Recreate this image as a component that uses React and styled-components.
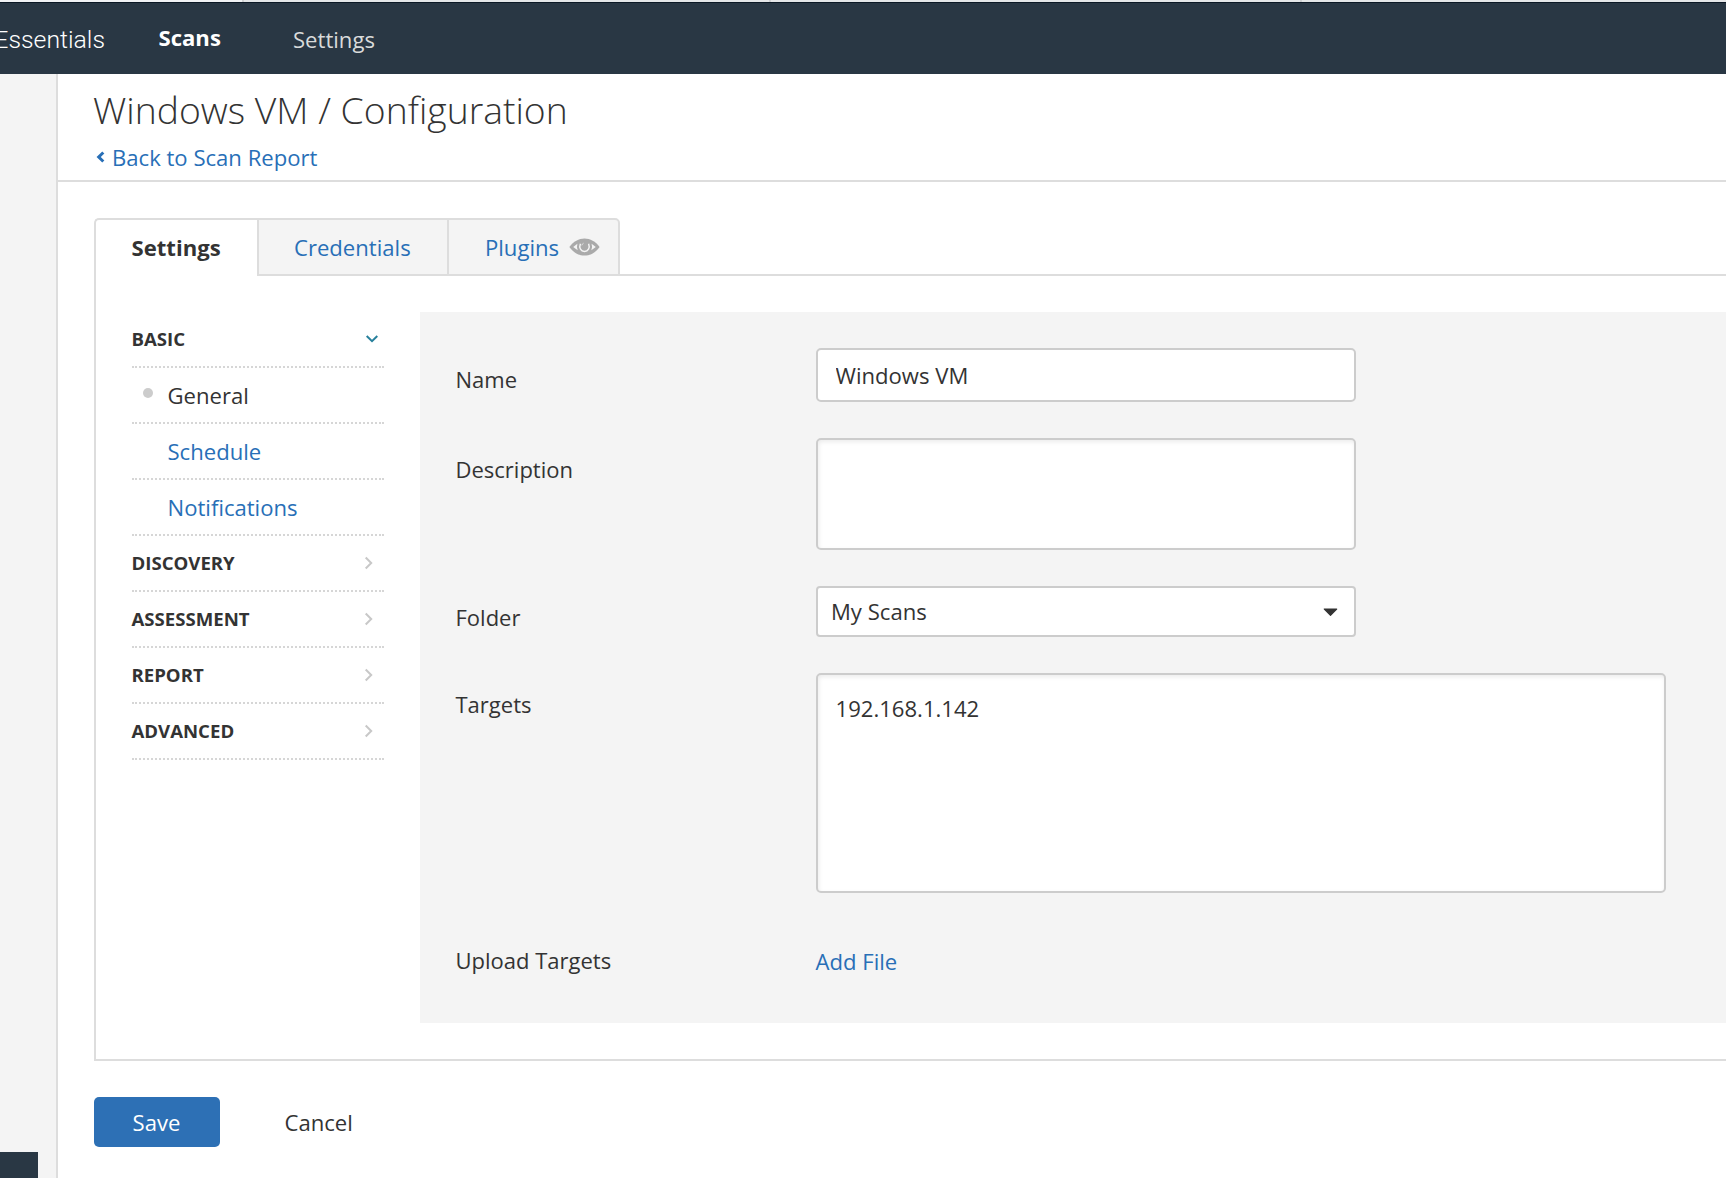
import React from "react";
import styled, { createGlobalStyle } from "styled-components";

const GlobalStyle = createGlobalStyle`
  *, *::before, *::after { box-sizing: border-box; }
  body {
    margin: 0;
    background: #fff;
    color: #333;
    font-family: "Open Sans", sans-serif;
    font-size: 22.1px;
    line-height: 30px;
    overflow: hidden;
  }
  button, input, textarea { font: inherit; color: inherit; }
`;

const Page = styled.div`
  display: flex;
  flex-direction: column;
  width: 1726px;
  height: 1178px;
  overflow: hidden;
`;

const WindowEdge = styled.div`
  display: flex;
  flex: none;
  height: 2px;
  background: #e4e6e8;
`;

const EdgeTab = styled.div`
  width: ${(p) => p.$width}px;
  border-right: 2px solid #cfd1d3;
  background: ${(p) => (p.$light ? "#f1f3f5" : "transparent")};
`;

const TopBar = styled.header`
  display: flex;
  flex: none;
  align-items: flex-start;
  height: 72px;
  border-top: 1px solid #0b1825;
  background: #293744;
  padding-top: 19px;
`;

const Brand = styled.div`
  display: flex;
  justify-content: flex-end;
  width: 105px;
  margin-right: 53.5px;
  padding-top: 3px;
  color: #fff;
  font-family: Roboto, sans-serif;
  font-size: 24.8px;
  font-weight: 300;
`;

const NavItem = styled.a`
  width: ${(p) => (p.$active ? "134.5px" : "auto")};
  padding-top: ${(p) => (p.$active ? 0 : 2)}px;
  color: ${(p) => (p.$active ? "#fff" : "#d9dbdb")};
  font-weight: ${(p) => (p.$active ? 700 : 400)};
`;

const Body = styled.div`
  display: flex;
  flex: 1;
  min-height: 0;
`;

const Sidebar = styled.aside`
  display: flex;
  flex-direction: column;
  justify-content: flex-end;
  width: 58px;
  border-right: 2px solid #ddd;
  background: #f4f4f4;
`;

const SidebarToggle = styled.div`
  width: 38px;
  height: 26px;
  background: #293744;
`;

const Main = styled.main`
  flex: 1;
  min-width: 0;
`;

const PageHeader = styled.div`
  height: 108px;
  padding: 10px 36px 0 35px;
  border-bottom: 2px solid #ddd;
`;

const Title = styled.h1`
  margin: 0 0 7px;
  font-size: 37.3px;
  font-weight: 300;
  line-height: 51px;
`;

const BackLink = styled.a`
  display: flex;
  align-items: center;
  gap: 7.5px;
  padding-left: 2.5px;
  color: #286fb7;
`;

const Content = styled.div`
  padding: 36px 0 0 36px;
`;

const TabBar = styled.div`
  display: flex;
  height: 58px;
`;

const Tab = styled.div`
  display: flex;
  align-items: center;
  gap: 10px;
  width: ${(p) => p.$width}px;
  padding-left: ${(p) => (p.$active ? 35.5 : p.$last ? 36 : 35)}px;
  padding-bottom: ${(p) => (p.$active ? 2 : 0)}px;
  border: 2px solid #ddd;
  border-right-width: ${(p) => (p.$last ? 2 : 0)}px;
  border-bottom-width: ${(p) => (p.$active ? 0 : 2)}px;
  border-radius: ${(p) => (p.$active ? "5px 0 0 0" : p.$last ? "0 5px 0 0" : "0")};
  background: ${(p) => (p.$active ? "#fff" : "#f4f4f4")};
  color: ${(p) => (p.$active ? "#333" : "#286fb7")};
  font-weight: ${(p) => (p.$active ? 700 : 400)};
`;

const TabRule = styled.div`
  flex: 1;
  border-bottom: 2px solid #ddd;
`;

const Panel = styled.section`
  display: flex;
  gap: 36px;
  padding: 36px 0 36px 36px;
  border-left: 2px solid #ddd;
  border-bottom: 2px solid #ddd;
`;

const SideNav = styled.nav`
  flex: none;
  width: 252px;
`;

const Row = styled.a`
  display: flex;
  align-items: center;
  height: 56px;
  border-bottom: 2px dotted #d6d6d6;
`;

const SectionRow = styled(Row)`
  justify-content: space-between;
  padding-right: ${(p) => (p.$open ? 5 : 11)}px;
  font-size: 18.6px;
  font-weight: 700;

  span { margin-left: -0.5px; }
`;

const ItemRow = styled(Row)`
  padding-left: ${(p) => (p.$current ? 11 : 35.5)}px;
  color: ${(p) => (p.$current ? "#333" : "#286fb7")};
`;

const Dot = styled.span`
  width: 10px;
  height: 10px;
  margin: 0 14.5px 4px 0;
  border-radius: 50%;
  background: #ccc;
`;

const Form = styled.form`
  display: flex;
  flex: 1;
  flex-direction: column;
  gap: 36px;
  height: 711px;
  padding: 36px 0 0 35.5px;
  background: #f4f4f4;
`;

const Field = styled.div`
  display: flex;
  align-items: flex-start;
`;

const Label = styled.label`
  flex: none;
  width: 360.5px;
  padding-top: 16px;
  font-size: 22px;
`;

const TextInput = styled.input`
  width: 540px;
  height: 54px;
  padding: 0 17.5px;
  border: 2px solid #ccc;
  border-radius: 5px;
  background: #fff;
  outline: none;
`;

const TextArea = styled.textarea`
  width: ${(p) => p.$width}px;
  height: ${(p) => p.$height}px;
  padding: 18px 17.5px;
  border: 2px solid #ccc;
  border-radius: 5px;
  background: #fff;
  box-shadow: inset 1px 2px 4px rgba(0, 0, 0, 0.08);
  outline: none;
  resize: none;
`;

const Select = styled.div`
  display: flex;
  align-items: center;
  justify-content: space-between;
  width: 540px;
  height: 51px;
  padding: 0 16px 1px 13px;
  border: 2px solid #ccc;
  border-radius: 4px;
  background: #fff;

  svg { margin-top: 2px; }
`;

const UploadLink = styled.a`
  margin-left: -0.5px;
  padding-top: 17px;
  color: #286fb7;
`;

const Actions = styled.div`
  display: flex;
  align-items: center;
  gap: 64.5px;
  padding-top: 36px;
`;

const SaveButton = styled.button`
  width: 126px;
  height: 50px;
  padding: 0 1px 0 0;
  border: 0;
  border-radius: 5px;
  background: #2d70b5;
  color: #fff;
  font-weight: 500;
`;

const CancelLink = styled.a``;

const EyeIcon = () => (
  <svg width="31" height="18" viewBox="0 0 31 18">
    <path d="M.4 9C4.5 3.2 9.8.4 15.5.4S26.500 3.200 30.600 9C26.500 14.800 21.200 17.600 15.500 17.600S4.500 14.800.4 9Z" fill="#aaa" />
    <path d="M4.200 9 8.400 5.700Q7.300 9 8.700 12.300ZM26.800 9 22.600 5.700Q23.700 9 22.300 12.300Z" fill="#f4f4f4" />
    <path d="M11.400 5.800C9.700 10 12 13.400 15.500 13.400S21.300 10 19.600 5.800" fill="none" stroke="#f4f4f4" strokeWidth="1.500" />
    <path d="M12.800 7.400Q13.100 5.700 14.600 5.200" fill="none" stroke="#dedede" strokeWidth="1" />
  </svg>
);

const BackIcon = () => (
  <svg width="9" height="12" viewBox="0 0 9 12">
    <path d="M7.300 1.500 2.700 6 7.300 10.500" fill="none" stroke="#286fb7" strokeWidth="3" />
  </svg>
);

const DownIcon = () => (
  <svg width="14" height="10" viewBox="0 0 14 10">
    <path d="M1.700 2 7 7.200 12.300 2" fill="none" stroke="#27809c" strokeWidth="2" />
  </svg>
);

const RightIcon = () => (
  <svg width="9" height="14" viewBox="0 0 9 14">
    <path d="M1.700 1.500 7.200 7 1.700 12.500" fill="none" stroke="#c8c8c8" strokeWidth="2" />
  </svg>
);

const CaretIcon = () => (
  <svg width="15" height="9" viewBox="0 0 15 9">
    <path d="M1.300 1H13.700L7.500 7.300Z" fill="#333" stroke="#333" strokeWidth="1.200" strokeLinejoin="round" />
  </svg>
);

const closedSections = ["DISCOVERY", "ASSESSMENT", "REPORT", "ADVANCED"];

export default function App() {
  return (
    <Page>
      <GlobalStyle />
      <WindowEdge>
        <EdgeTab $width={244} $light />
        <EdgeTab $width={527} />
        <EdgeTab $width={531} />
      </WindowEdge>
      <TopBar>
        <Brand>Essentials</Brand>
        <NavItem $active>Scans</NavItem>
        <NavItem>Settings</NavItem>
      </TopBar>
      <Body>
        <Sidebar>
          <SidebarToggle />
        </Sidebar>
        <Main>
          <PageHeader>
            <Title>Windows VM / Configuration</Title>
            <BackLink>
              <BackIcon />
              Back to Scan Report
            </BackLink>
          </PageHeader>
          <Content>
            <TabBar>
              <Tab $width={163} $active>Settings</Tab>
              <Tab $width={190}>Credentials</Tab>
              <Tab $width={173} $last>
                Plugins
                <EyeIcon />
              </Tab>
              <TabRule />
            </TabBar>
            <Panel>
              <SideNav>
                <SectionRow $open>
                  <span>BASIC</span>
                  <DownIcon />
                </SectionRow>
                <ItemRow $current>
                  <Dot />
                  General
                </ItemRow>
                <ItemRow>Schedule</ItemRow>
                <ItemRow>Notifications</ItemRow>
                {closedSections.map((name) => (
                  <SectionRow key={name}>
                    <span>{name}</span>
                    <RightIcon />
                  </SectionRow>
                ))}
              </SideNav>
              <Form>
                <Field>
                  <Label>Name</Label>
                  <TextInput defaultValue="Windows VM" />
                </Field>
                <Field>
                  <Label>Description</Label>
                  <TextArea $width={540} $height={112} />
                </Field>
                <Field>
                  <Label>Folder</Label>
                  <Select>
                    My Scans
                    <CaretIcon />
                  </Select>
                </Field>
                <Field>
                  <Label>Targets</Label>
                  <TextArea $width={850} $height={220} spellCheck={false} defaultValue="192.168.1.142" />
                </Field>
                <Field>
                  <Label>Upload Targets</Label>
                  <UploadLink>Add File</UploadLink>
                </Field>
              </Form>
            </Panel>
            <Actions>
              <SaveButton type="button">Save</SaveButton>
              <CancelLink>Cancel</CancelLink>
            </Actions>
          </Content>
        </Main>
      </Body>
    </Page>
  );
}
